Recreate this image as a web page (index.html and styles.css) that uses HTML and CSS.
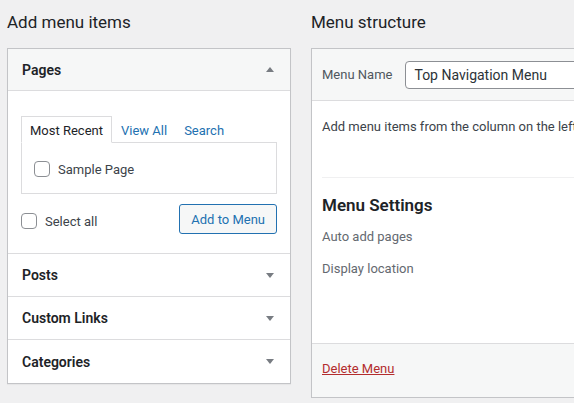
FILE: index.html
```html
<!DOCTYPE html>
<html lang="en">
<head>
    <meta charset="UTF-8">
    <meta name="viewport" content="width=device-width, initial-scale=1.0">
    <title>Menus</title>
    <link rel="stylesheet" href="styles.css">
</head>
<body>
    <div class="menus-wrap">
        <div class="menu-items-col">
            <h2 class="col-title">Add menu items</h2>
            <div class="accordion">
                <div class="acc-section open">
                    <div class="acc-title">
                        <span>Pages</span>
                        <span class="arrow up"></span>
                    </div>
                    <div class="acc-content">
                        <ul class="tabs">
                            <li class="tab active">Most Recent</li>
                            <li class="tab"><a href="#">View All</a></li>
                            <li class="tab"><a href="#">Search</a></li>
                        </ul>
                        <div class="tab-panel">
                            <label class="check-row">
                                <span class="checkbox"></span>
                                Sample Page
                            </label>
                        </div>
                        <div class="button-row">
                            <label class="check-row">
                                <span class="checkbox"></span>
                                Select all
                            </label>
                            <button class="add-button">Add to Menu</button>
                        </div>
                    </div>
                </div>
                <div class="acc-section">
                    <div class="acc-title">
                        <span>Posts</span>
                        <span class="arrow"></span>
                    </div>
                </div>
                <div class="acc-section">
                    <div class="acc-title">
                        <span>Custom Links</span>
                        <span class="arrow"></span>
                    </div>
                </div>
                <div class="acc-section">
                    <div class="acc-title">
                        <span>Categories</span>
                        <span class="arrow"></span>
                    </div>
                </div>
            </div>
        </div>

        <div class="menu-structure-col">
            <h2 class="col-title">Menu structure</h2>
            <div class="menu-edit">
                <div class="menu-header">
                    <label class="menu-name-label" for="menu-name">Menu Name</label>
                    <input type="text" id="menu-name" class="menu-name-input" value="Top Navigation Menu">
                </div>
                <div class="menu-body">
                    <p class="menu-hint">Add menu items from the column on the left.</p>
                    <div class="menu-settings">
                        <h3 class="settings-title">Menu Settings</h3>
                        <p class="settings-row">Auto add pages</p>
                        <p class="settings-row">Display location</p>
                    </div>
                </div>
                <div class="menu-footer">
                    <a href="#" class="delete-link">Delete Menu</a>
                </div>
            </div>
        </div>
    </div>
</body>
</html>
```

FILE: styles.css
```css
* {
    margin: 0;
    padding: 0;
    box-sizing: border-box;
}

body {
    font-family: "Segoe UI", Roboto, "Noto Sans", sans-serif;
    font-size: 13px;
    color: #3c434a;
    background: #f0f0f1;
    overflow: hidden;
}

.menus-wrap {
    display: flex;
    gap: 20px;
    padding-left: 7px;
    width: 1000px;
}

.menu-items-col {
    width: 284px;
    flex-shrink: 0;
}

.menu-structure-col {
    width: 600px;
    flex-shrink: 0;
}

.col-title {
    font-size: 17px;
    font-weight: 400;
    color: #1d2327;
    height: 48px;
    line-height: 44px;
}

/* accordion */
.accordion {
    background: white;
    border: 1px solid #c3c4c7;
    box-shadow: 0 1px 1px rgba(0, 0, 0, 0.04);
}

.acc-section {
    border-bottom: 1px solid #dcdcde;
}

.acc-section:last-child {
    border-bottom: none;
}

.acc-title {
    height: 42px;
    display: flex;
    align-items: center;
    justify-content: space-between;
    padding: 0 16px 0 14px;
    font-size: 14px;
    font-weight: 600;
    color: #1d2327;
}

.acc-section:last-child .acc-title {
    height: 43px;
}

.acc-section.open .acc-title {
    background: #f6f7f7;
    border-bottom: 1px solid #dcdcde;
}

.arrow {
    width: 0;
    height: 0;
    border-left: 4.5px solid transparent;
    border-right: 4.5px solid transparent;
    border-top: 5px solid #787c82;
}

.arrow.up {
    border-top: none;
    border-bottom: 5px solid #787c82;
}

.acc-content {
    padding: 25px 13px 19px 13px;
}

.tabs {
    list-style: none;
    display: flex;
    height: 27px;
}

.tab {
    padding: 0 8px;
    line-height: 30px;
    margin-right: 1px;
}

.tab.active {
    border: 1px solid #dcdcde;
    border-bottom: 1px solid white;
    background: white;
    position: relative;
    z-index: 1;
    color: #1d2327;
    line-height: 28px;
}

.tab a {
    color: #2271b1;
    text-decoration: none;
}

.tab-panel {
    border: 1px solid #dcdcde;
    margin-top: -1px;
    height: 52px;
    display: flex;
    align-items: center;
    padding: 2px 12px 0 12px;
}

.check-row {
    display: flex;
    align-items: center;
    gap: 8px;
    color: #3c434a;
}

.checkbox {
    width: 16px;
    height: 16px;
    border: 1px solid #8c8f94;
    border-radius: 4px;
    background: white;
}

.button-row {
    display: flex;
    justify-content: space-between;
    align-items: center;
    margin-top: 10px;
}

.button-row .check-row {
    padding-top: 4px;
}

.add-button {
    font-family: inherit;
    font-size: 13px;
    color: #2271b1;
    background: #f6f7f7;
    border: 1px solid #2271b1;
    border-radius: 3px;
    height: 30px;
    padding: 0 11px;
    cursor: pointer;
}

/* menu structure */
.menu-edit {
    background: white;
    border: 1px solid #c3c4c7;
    box-shadow: 0 1px 1px rgba(0, 0, 0, 0.04);
}

.menu-header {
    background: #f6f7f7;
    border-bottom: 1px solid #dcdcde;
    height: 52px;
    display: flex;
    align-items: center;
    padding: 0 10px;
}

.menu-name-label {
    color: #50575e;
    margin-right: 13px;
}

.menu-name-input {
    font-family: inherit;
    font-size: 14px;
    color: #2c3338;
    width: 260px;
    height: 28px;
    border: 1px solid #8c8f94;
    border-radius: 4px;
    padding: 0 8px;
    background: white;
}

.menu-body {
    padding: 0 10px;
}

.menu-hint {
    padding-top: 18px;
    height: 76px;
    color: #3c434a;
}

.menu-settings {
    border-top: 1px solid #f0f0f1;
    height: 166px;
    padding-top: 17px;
}

.settings-title {
    font-size: 17px;
    font-weight: 600;
    color: #1d2327;
    margin-bottom: 14px;
}

.settings-row {
    color: #646970;
    height: 32px;
}

.menu-footer {
    background: #f6f7f7;
    border-top: 1px solid #dcdcde;
    height: 54px;
    padding: 17px 10px 0 10px;
}

.delete-link {
    color: #b32d2e;
    text-decoration: underline;
}
```
